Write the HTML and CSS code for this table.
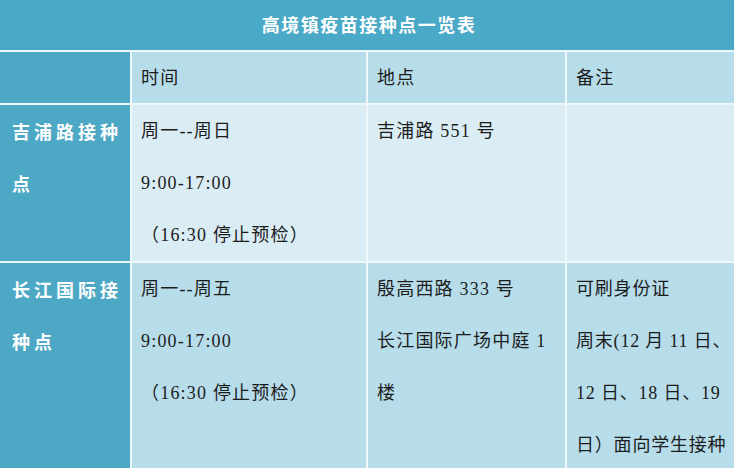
FILE: index.html
```html
<!DOCTYPE html>
<html lang="zh-CN">
<head>
<meta charset="utf-8">
<title>高境镇疫苗接种点一览表</title>
<link rel="stylesheet" href="styles.css">
</head>
<body>
<div class="table">
  <div class="title">高境镇疫苗接种点一览表</div>

  <div class="cell side"></div>
  <div class="cell head">时间</div>
  <div class="cell head">地点</div>
  <div class="cell head">备注</div>

  <div class="cell side">吉浦路接种<br>点</div>
  <div class="cell light">周一--周日<br>9:00-17:00<br>（16:30 停止预检）</div>
  <div class="cell light">吉浦路 551 号</div>
  <div class="cell light"></div>

  <div class="cell side">长江国际接<br>种点</div>
  <div class="cell mid">周一--周五<br>9:00-17:00<br>（16:30 停止预检）</div>
  <div class="cell mid">殷高西路 333 号<br>长江国际广场中庭 1<br>楼</div>
  <div class="cell mid note">可刷身份证<br>周末(12 月 11 日、<br>12 日、18 日、19<br>日）面向学生接种</div>
</div>
</body>
</html>
```

FILE: styles.css
```css
html, body {
  margin: 0;
  padding: 0;
  background: #ffffff;
  width: 736px;
  height: 468px;
  overflow: hidden;
}

.table {
  display: grid;
  grid-template-columns: 130px 234px 197px 167px;
  grid-template-rows: 50px 51px 156px 210px;
  gap: 2px;
  width: 734px;
  background: #eef7fa;
  font-family: "Liberation Serif", "Noto Sans CJK SC", serif;
  font-size: 18px;
  color: #1c1c1c;
}

.title {
  grid-column: 1 / -1;
  background: #4aa9c7;
  color: #ffffff;
  font-family: "Noto Sans CJK SC", sans-serif;
  font-weight: bold;
  font-size: 18px;
  letter-spacing: 1.5px;
  display: flex;
  align-items: center;
  justify-content: center;
  padding-left: 4px;
  padding-bottom: 2px;
}

.cell {
  line-height: 52px;
  padding: 0 4px 0 9px;
  letter-spacing: 1.2px;
  white-space: nowrap;
}

.note {
  padding-right: 0;
  letter-spacing: 0.8px;
}

.side {
  background: #4da8c5;
  color: #ffffff;
  font-family: "Noto Sans CJK SC", sans-serif;
  font-weight: bold;
  font-size: 18px;
  letter-spacing: 4px;
  padding-left: 12px;
}

.head {
  background: #b7dcea;
}

.light {
  background: #daedf4;
}

.mid {
  background: #b7dcea;
}
```
